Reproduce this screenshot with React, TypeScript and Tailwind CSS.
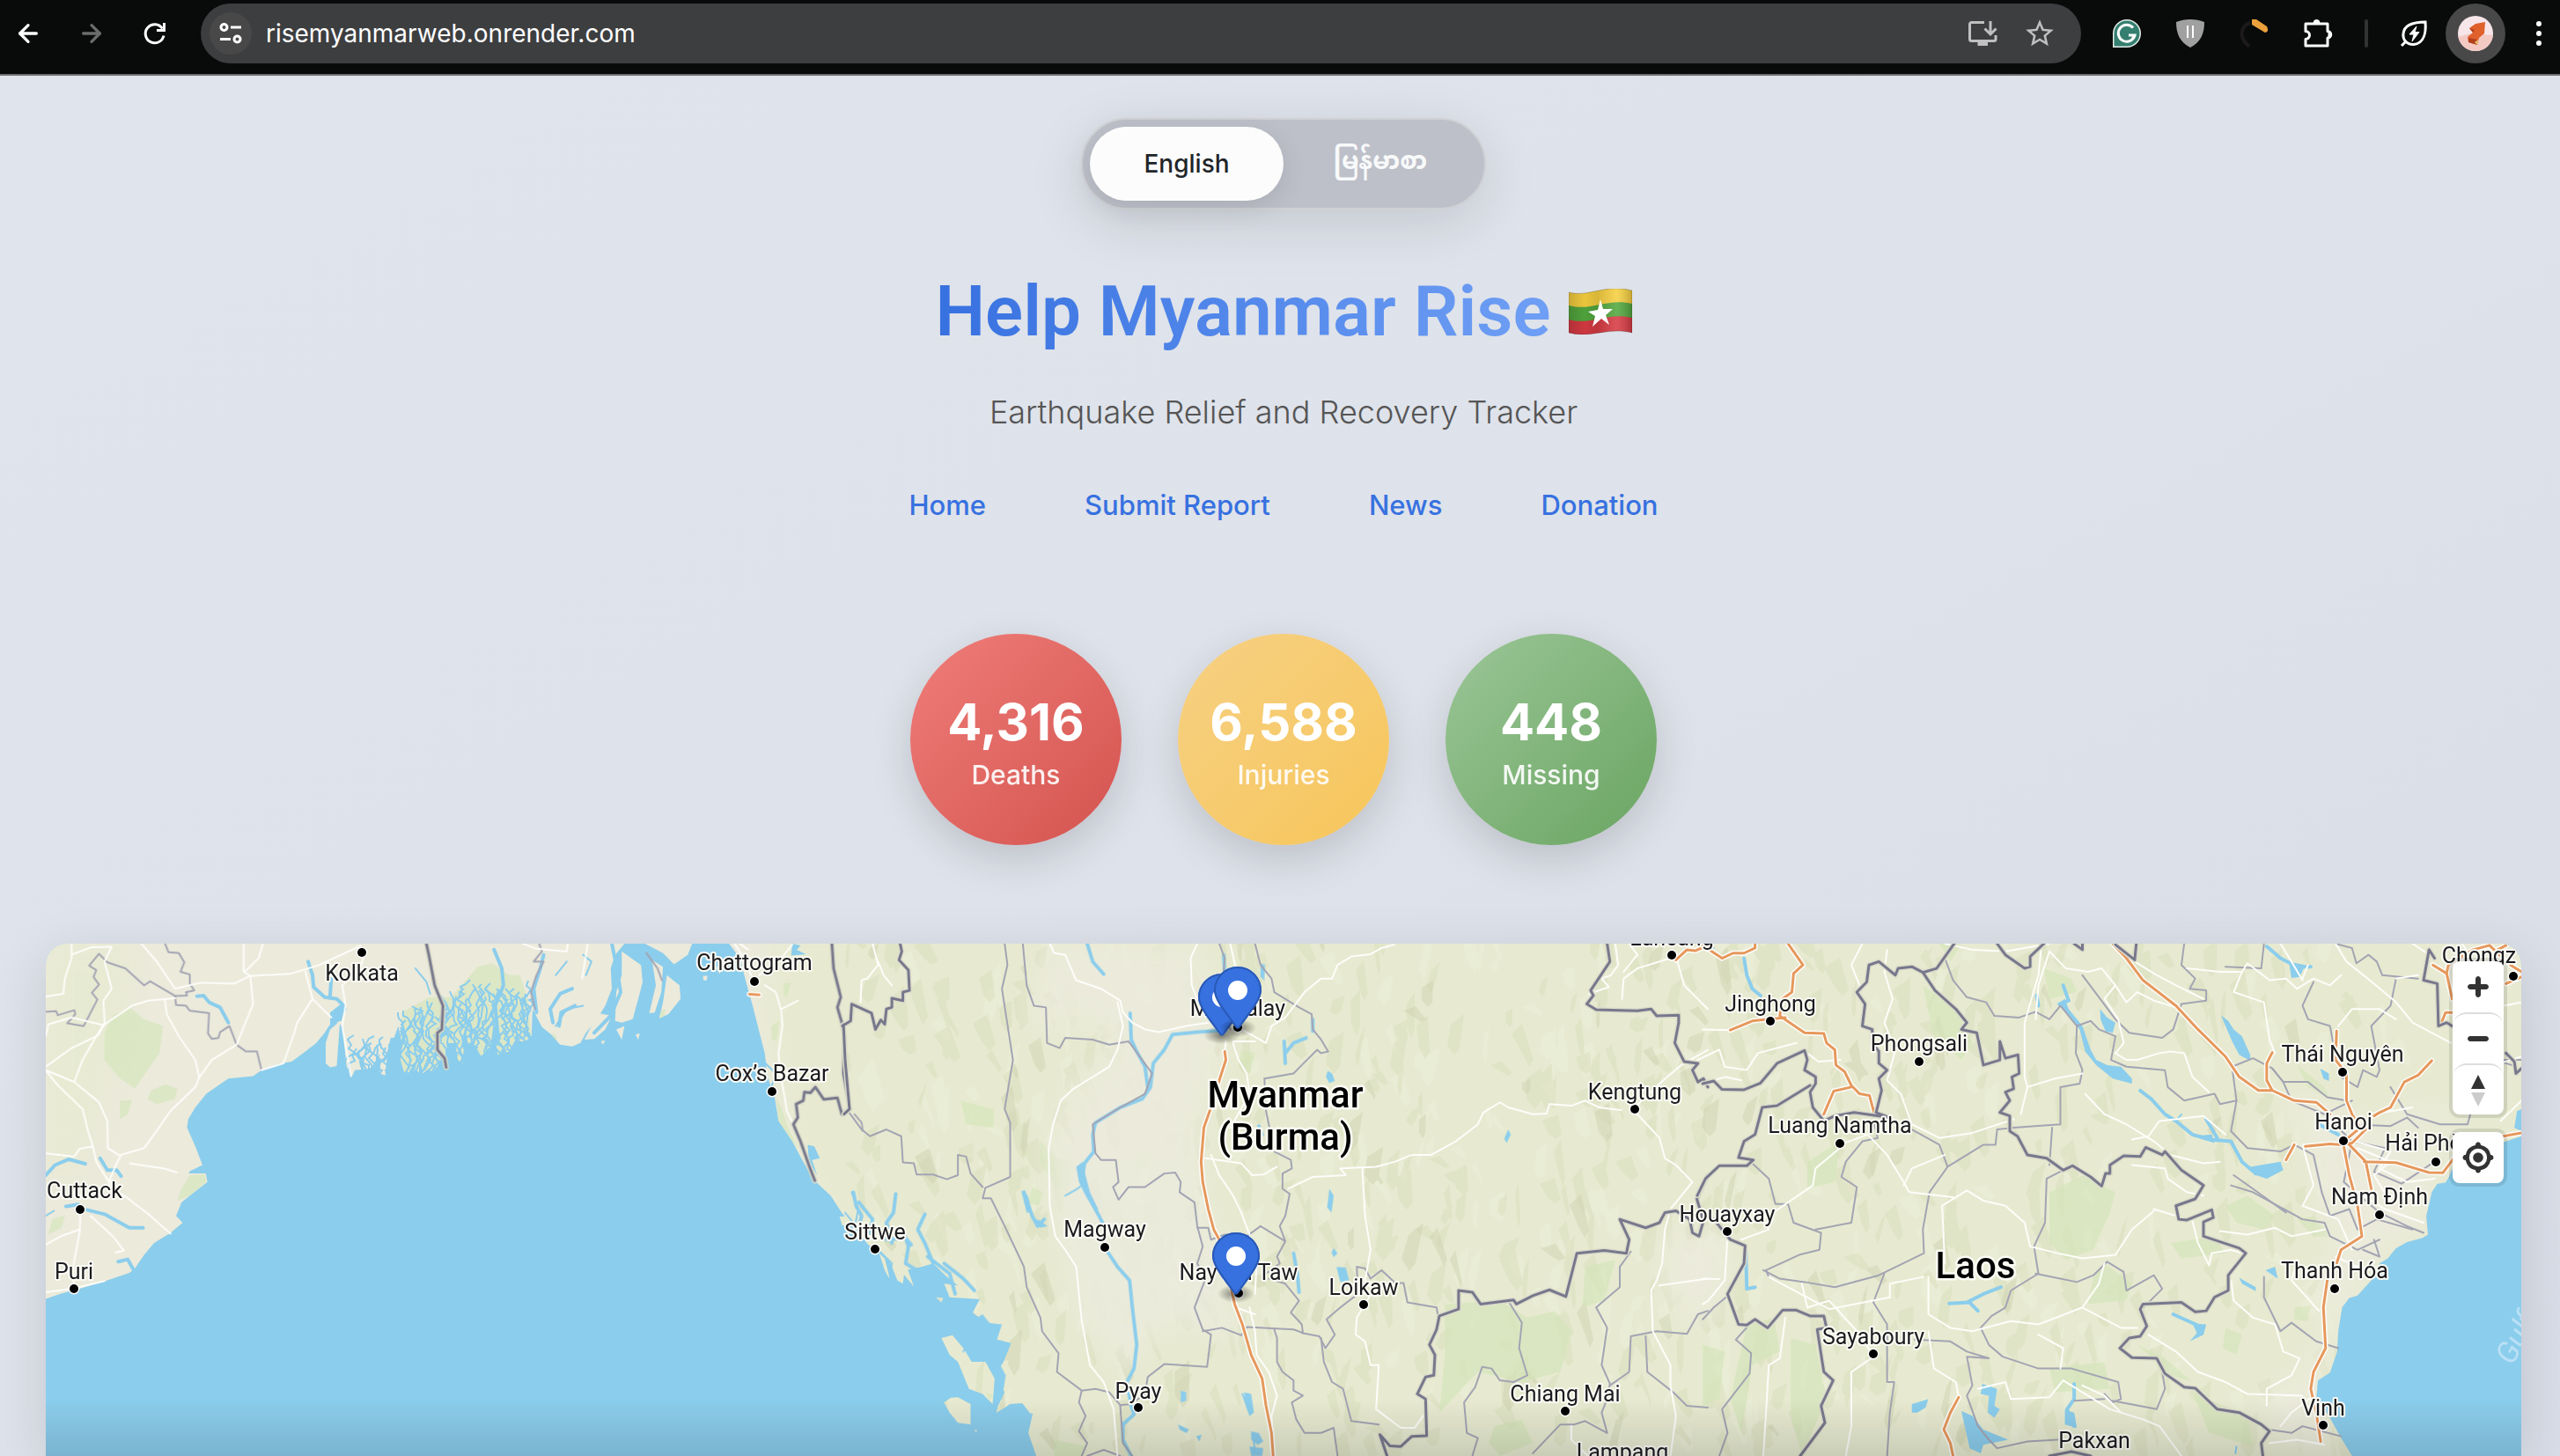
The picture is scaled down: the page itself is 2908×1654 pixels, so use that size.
import type { ReactNode } from "react";
import { ArrowLeft, ArrowRight } from "lucide-react";
import { MdStarOutline } from "react-icons/md";

// ---------------------------------------------------------------------------
// Map data. The geometry is stored in three tiles, each on its own local grid.
// ---------------------------------------------------------------------------

interface Tile {
  id: string;
  originX: number;
  land: string[];
  plain: string[];
  green: string[];
  water: string[];
  rivers: string[];
  thinRivers: string[];
  provinces: string[];
  roads: string[];
  highways: string[];
  countries: string[];
}

const WEST: Tile = {
  id: "west",
  originX: 0,
  land: [
    "M83 57H1135L1118 90 1110 130 1112 190 1100 240 1085 280 1065 320 1055 350 1040 360 1018 355 1002 325 985 303 968 250 966 330 955 345 935 345 925 375 905 385 900 345 885 370 875 390 860 350 845 350 842 410 832 400 828 350 812 350 812 415 800 400 790 435 775 430 765 445 757 430 735 440 728 400 725 335 710 335 705 370 700 445 688 445 690 380 675 425 645 430 640 448 630 420 622 300 608 285 598 300 590 320 575 350 555 375 530 405 505 412 475 430 460 448 415 455 375 500 355 540 342 575 340 600 355 655 368 710 345 728 340 745 343 735 374 735 377 760 345 800 330 820 320 860 332 880 310 910 280 940 262 975 245 1015 235 1028 195 1050 150 1072 110 1090 83 1105Z",
    "M618 285L600 310 592 350 592 410 600 422 612 418Z",
    "M1130 80L1165 120 1168 170 1160 220 1150 280 1130 290 1118 285 1120 200 1130 150Z",
    "M1185 105L1205 125 1202 200 1190 260 1180 262 1192 180Z",
    "M1212 150L1235 180 1237 220 1215 265 1198 278 1205 230Z",
    "M1088 262L1112 270 1100 310 1080 338 1062 340 1075 300Z",
    "M1120 310L1135 300 1130 340ZM1155 325L1163 322 1160 340ZM1092 345L1100 342 1096 355ZM1278 152L1286 152 1284 166 1278 164ZM1300 125L1312 130 1308 146Z",
    "M1172 57H1258L1250 90 1225 118 1205 85Z",
    "M1325 57L1345 100 1355 165 1368 240 1382 330 1390 380 1395 450 1408 510 1415 580 1440 640 1460 700 1480 755 1510 800 1530 850 1545 880 1568 900 1575 57Z",
  ],
  plain: [],
  green: [
    "M205 270L235 245 262 280 296 300 290 380 268 430 245 485 215 450 190 400 190 320Z",
    "M275 490L300 472 322 485 318 515 285 530 268 515Z",
    "M345 740L372 738 375 760 345 800 322 815 330 780Z",
    "M95 870L118 858 112 895 88 915Z",
    "M218 520L240 518 232 560 218 575Z",
    "M730 260L780 215 820 215 868 125 895 115 925 150 945 150 960 230 966 330 955 343 925 375 905 385 875 390 845 400 812 412 790 435 757 430 735 438 728 400Z",
    "M1002 322L1012 330 1010 348ZM1198 255L1210 250 1206 278 1197 275Z",
    "M1424 175L1438 172 1430 215 1424 205ZM1402 300L1416 285 1412 345 1403 340Z",
    "M1410 510L1420 540 1432 600 1450 660 1440 640 1415 580Z",
  ],
  water: [
    "M600 260L622 232 630 250 618 285 600 300ZM1440 57L1455 62 1448 75 1465 88 1438 92Z",
    "M1468 650L1480 655 1490 690 1476 695 1485 740 1470 700Z",
    "M840 345L846 300 850 350 846 400ZM893 345L898 280 905 340 900 380ZM716 335L724 300 730 350 722 430 706 430 708 370Z",
  ],
  rivers: [
    "M560 110L568 150 570 185 590 215 612 220 625 240 618 280",
    "M602 160L600 210M898 75L912 130 915 180 900 240 905 330M988 90L982 130 970 190 975 260",
    "M1005 290L1000 250 1018 205 1040 190M1016 300L1020 260 1045 240",
    "M1112 57L1120 120 1128 200 1110 270 1080 320M1150 60L1175 130 1180 200 1162 280",
    "M83 740L100 710 125 693 155 706M158 842L190 855 235 895 260 895M120 832L142 826",
    "M358 212L370 210 380 230 400 245 415 290M182 690L195 725 212 725 220 743M215 995L232 988 243 1020",
  ],
  thinRivers: [
    "M755 130L775 170 782 205M1060 240L1030 250 1010 300M1375 330L1385 400 1410 440 1400 490",
    "M83 860L98 845M1548 790L1560 840 1555 880M1060 90L1075 110 1065 150M1030 110L1010 150",
  ],
  provinces: [
    "M83 258L102 256 105 268 135 253 137 265 122 292 152 300 177 222 167 202 180 178 170 155 175 135 162 122 180 87 195 112 228 130 262 180 273 168 318 211",
    "M300 57L306 82 325 85 335 112 328 140 345 148 345 175 353 195 338 200 340 210 318 211 320 238 338 240 345 255 380 262 378 322 385 338 397 335 400 318 417 300 430 355 447 375 467 375 475 428",
    "M980 57L985 80 970 110 988 110 975 150 965 200 972 250M1175 85L1195 130 1203 165",
    "M1553 560L1566 585 1568 610",
  ],
  roads: [
    "M83 213L115 205 118 160 130 100 130 57M130 90L165 68 203 66 190 110 203 190 188 225 190 290 175 330",
    "M257 57L285 110 318 190M83 420L130 365 178 328 190 295 240 240 270 225 318 218M318 190L365 172 425 175 455 152 528 146 580 120 640 75 655 62",
    "M443 57V140L455 152 460 235 430 355M478 57L470 100 445 140M430 355L385 400 362 452 355 480 310 550 280 620 262 660 220 680 212 705 200 750 198 770 230 805 270 855 310 912",
    "M300 225L303 265 325 330 355 400 362 452M83 430L105 475 150 545 160 610 168 650 175 700 198 760M83 430L135 465 180 525 195 580 196 660 218 682",
    "M83 675L135 685 145 662 168 655M236 705L298 720 322 732M83 330L88 295 130 275 190 298M135 465L150 400 175 330",
    "M475 430L515 410 535 320 540 290 568 220 555 140M568 220L602 275M660 100L655 130 622 180 628 240 622 300 638 448",
    "M146 858L145 905 133 1010 134 1060M165 860L205 920 225 962 210 968M83 945L110 920 145 900M83 1085L130 1075 190 1052M1058 160L1062 120 1068 57M950 57L975 72 1030 80 1032 57",
    "M1335 57L1348 90 1365 150M1390 180L1410 200 1420 255 1422 300 1415 380 1418 440 1425 500M1420 250L1450 225M1345 57L1360 75M1380 150L1420 100 1440 60M1425 500L1430 550 1445 600 1460 680 1475 740",
  ],
  highways: ["M1362 206L1380 208"],
  countries: [
    "M775 57L780 95 790 180 805 240 803 310 795 320 795 370 808 395 811 422",
    "M1512 57L1515 130 1528 215 1522 245 1530 290 1535 330 1533 440 1545 545 1530 560 1522 512 1497 516 1482 480 1473 497 1462 495 1460 520 1447 530 1450 570 1442 590 1455 640 1470 710 1481 756",
    "M1533 296L1545 288 1550 235 1568 250",
  ],
};

const CENTRAL: Tile = {
  id: "central",
  originX: 960,
  land: [
    "M25 57V862L-10 862 -5 888 12 880 42 945 60 962 80 990 95 1050 105 1060 108 1020 140 1010 160 1000 185 1040 205 1065 180 1060 190 1100 245 1105 232 1145 255 1175 285 1180 276 1225 302 1235 288 1290 272 1330 290 1380 278 1420 275 1440 300 1415 322 1412 340 1450 333 1500 350 1580H1610V57Z",
    "M175 1220L195 1212 215 1250 230 1290 255 1290 272 1340 268 1415 250 1385 225 1370 205 1290 190 1270Z",
    "M180 1410L192 1396 205 1395 228 1415 228 1475 205 1470 190 1440Z",
    "M62 970L72 985 82 1050 72 1020ZM90 985L110 1000 125 1068 108 1035ZM165 1100L178 1102 175 1115ZM235 1490L240 1492 238 1498Z",
  ],
  plain: [
    "M375 57H640L655 150 690 330 670 460 648 600 650 760 668 880 705 1060 660 1180 560 1200 520 1330 430 1180 395 960 372 820 372 620 410 470 490 380 440 280 350 330 340 200Z",
    "M1490 900L1568 900V1180L1520 1160 1480 1040Z",
    "M620 1150L700 1120 740 1210 670 1220Z",
  ],
  green: [
    "M1090 1120L1190 1110 1240 1160 1290 1140 1320 1200 1300 1320 1230 1350 1150 1320 1080 1440 1090 1270Z",
    "M425 520L440 560 443 620 430 590ZM355 640L385 690 415 700 405 790 380 770 355 700ZM255 1380L270 1390 262 1400Z",
    "M530 670L552 675 548 720 530 710ZM340 775L360 790 352 830 332 822ZM465 840L485 850 475 880Z",
    "M1180 1480L1230 1460 1250 1530 1190 1568 1170 1530ZM1345 1010L1400 990 1380 1110 1340 1130Z",
    "M720 370L745 380 735 440 715 420ZM210 520L270 545 270 600 220 590Z",
    "M380 1520L440 1540 430 1568 380 1568Z",
  ],
  water: [
    "M877 432L885 440 890 462 880 468 874 450ZM1205 605L1210 620 1202 645 1198 632ZM880 780L888 800 884 850 876 835 878 810Z",
    "M888 955L895 970 888 982 884 968ZM893 1010L910 1012 916 1050 900 1055ZM610 1375L620 1380 620 1405 610 1410ZM605 1475L625 1490 620 1500 608 1490Z",
    "M725 1380L738 1385 743 1440 735 1450 728 1420ZM738 1495L752 1500 760 1525 750 1535 738 1520ZM735 1540L760 1545 758 1568 738 1568ZM638 1510L648 1505 644 1525Z",
    "M755 115L763 120 762 165 755 155ZM320 785L332 800 340 850 330 850ZM342 868L352 872 368 890 355 895Z",
    "M420 715L432 700 437 740 445 790 460 840 455 850 437 800 425 760Z",
    "M235 1165L250 1150 262 1175 275 1190 268 1225 255 1215 240 1240 215 1235 210 1205 225 1200ZM272 1245L285 1260 282 1300 292 1330 285 1400 272 1400Z",
  ],
  rivers: [
    "M692 312L640 318 595 325 580 370 560 410 555 480 540 515 500 540 455 585 450 620 452 670 435 705 430 760 445 810 468 880",
    "M440 57L450 110 470 147M518 262L520 340 530 375 545 420 550 480M688 90L690 150 680 200 690 300",
    "M478 968L495 1010 517 1050 522 1130 530 1240 525 1310 512 1350 520 1420 525 1445 505 1475 505 1520 520 1568",
    "M15 790L20 830 30 860 25 890M92 795L88 850 75 880 85 940M145 855L132 900 145 940 160 1000M105 900L115 950 110 1000 130 1020",
    "M25 820L50 870 45 910M75 930L110 925 120 945M150 980L190 1030 200 1090M180 1000L215 1045 235 1080",
    "M325 790L340 860 350 890 362 870M815 970L822 1030 825 1085M798 345L800 410M800 380L815 350 838 335M850 280L850 315M752 595L758 620",
  ],
  thinRivers: [
    "M0 850L20 890M400 800L420 782 430 770M60 960L85 1000 80 1060M205 1160L230 1210 215 1260M285 1230L262 1270 275 1300",
    "M722 1385L735 1440M740 1500L745 1550M300 1420L320 1450 340 1445M310 1450L325 1490",
  ],
  provinces: [
    "M290 57L295 120 285 190 305 400 290 545 300 585 300 745 255 777 250 808 265 808 290 890 325 1010 330 1070 355 1160 358 1200 388 1265 385 1320 430 1375 425 1410 437 1450 425 1495 440 1530 430 1568",
    "M5 550L30 605 45 625 75 605 102 625 105 702 125 705 130 738 160 738 185 752 205 740 205 680 220 685 228 735 250 775",
    "M323 57L330 180 343 240 365 245 367 350 390 365 400 335 450 340 480 355 515 345 522 360 558 440 545 500 495 545 450 590 455 675 465 695 492 695 497 760 487 775 497 812 515 775 545 775 580 735 600 732 610 760 608 790 635 820 640 890 650 950 640 1000 655 1045 635 1130 650 1195 665 1210 658 1305 580 1297 550 1335 545 1385 520 1415 500 1418 480 1380 455 1370 430 1375",
    "M680 57L690 100 685 200 700 310M745 57L755 120 775 160 780 200 825 245 848 265 850 310 865 340 878 375 865 380 858 370 830 415 815 440 762 455 765 550 770 590 780 670 810 695 812 720 795 735 795 780 808 795 800 860 790 890 800 935 785 980 790 1000 765 1030",
    "M640 895L660 895 665 930 690 915 730 920 755 890 800 935M650 1200L685 1190 720 1212 730 1188 815 1195 832 1205 830 1180 810 1145 825 1110 800 1060 770 1045",
    "M930 1010L945 1015 955 1045 975 1020 1000 1058 1015 1058 1022 1115 1075 1130 1077 1150M930 1010L932 1090 900 1130 875 1165 890 1210 873 1250 862 1215 830 1205",
    "M780 1195L785 1220 785 1290 795 1320 815 1345 815 1375 832 1390 812 1410 820 1460 835 1500 865 1500 888 1485 895 1568M865 1220L870 1290 885 1350 905 1370 920 1465 970 1475",
    "M1205 1110L1230 1175 1225 1250 1240 1330 1215 1350 1190 1345 1175 1310 1158 1305 1145 1365 1125 1410 1130 1500 1150 1515 1140 1568",
    "M1428 965L1408 1010 1408 1070 1365 1130 1385 1190 1375 1300 1390 1355 1385 1400 1375 1440 1385 1500 1345 1465 1325 1475 1300 1475 1250 1560M1568 1140L1550 1150 1530 1208 1475 1200 1428 1215 1425 1320 1390 1360M1455 1215L1458 1320 1505 1380 1530 1420 1568 1425",
    "M440 1568L470 1550 500 1568M500 1420L505 1530 522 1568",
  ],
  roads: [
    "M372 57L380 85 400 90 420 165 465 190 500 225 505 260 522 290 545 310 570 318 620 300 660 290M495 230L505 300 495 370 480 420 415 485 392 520 378 590 370 660 372 830 382 920 400 960 420 1010 430 1170 445 1300 470 1350 488 1430 495 1568",
    "M640 57L628 100 630 180 640 220M700 57L710 130 720 200M715 305L765 350 775 300 800 275 835 200 865 160 885 160 895 120 920 95 955 88 975 70 998 60",
    "M705 345L745 345M705 350L715 400 730 440 735 500 700 600M692 345L690 375M655 690L720 705 740 740 760 738 785 715M665 680L680 740 705 800 720 850 735 915",
    "M805 780L850 745 910 740 900 720 965 715 1000 700 1030 680 1065 680 1110 640 1150 590 1160 555 1190 525 1205 540 1250 560 1275 558 1280 530 1320 535 1345 520 1370 540 1410 548M940 720L945 860 955 960 945 1050 960 1080 930 1160 928 1210 945 1230 955 1300 970 1300 965 1430 1010 1485 1035 1485 1055 1440",
    "M1440 560L1480 630 1490 690 1510 710 1540 760 1500 840 1490 900 1485 1000 1475 1050 1465 1080 1468 1200 1500 1300 1500 1360 1510 1450 1500 1568M1480 1065L1568 1045M1435 540L1480 470 1520 415 1568 370",
    "M50 57L60 120 40 160 30 165 28 230M60 110L70 150 85 180M735 1130L745 1200 748 1270 770 1320 785 1390 775 1450 780 1568M735 920L748 1000 745 1090",
    "M1400 60L1405 120 1392 150 1375 160 1388 185 1352 205M1500 100L1440 130 1415 160 1412 220M1425 57L1440 90 1415 140M1510 95L1525 180 1568 250M1320 1480L1320 1520 1350 1568M700 1100L710 1130 745 1150",
  ],
  highways: [
    "M690 375L692 400 680 460 665 540 652 600 647 700 650 760 660 840 670 900 690 960 700 1060 708 1120 722 1180 738 1270 758 1340 765 1420 775 1500 778 1568",
    "M1510 105L1530 75 1545 78 1568 62",
  ],
  countries: [
    "M100 57L103 80 98 105 115 135 117 195 105 200 105 225 85 218 85 245 75 250 72 295 65 282 55 310 48 262 12 235 10 285 -5 300",
    "M-3 296L0 400 8 545 -2 560",
    "M1385 57L1390 110 1355 195 1360 210 1348 235 1365 252 1440 255 1465 250 1475 270 1515 268 1515 290 1508 350 1525 405 1550 410 1540 430 1550 465 1560 455 1568 480",
    "M1568 740L1548 810 1560 875 1552 920 1540 910 1535 870 1510 845 1490 850 1480 880 1455 895 1408 870 1425 930 1420 970 1380 962 1330 970 1310 1098 1280 1078 1250 1095 1220 1120 1215 1108 1155 1120 1140 1085 1115 1080 1115 1135 1080 1155 1075 1195 1062 1240 1072 1270 1070 1330 1055 1335 1040 1385 1055 1400 1057 1508 1030 1510 1010 1540 990 1538 972 1505 985 1568",
  ],
};

const EAST: Tile = {
  id: "east",
  originX: 1928,
  land: ["M10 57H1510V1580H10Z"],
  plain: [
    "M1060 500L1140 520 1190 560 1300 640 1375 700 1330 790 1325 920 1260 950 1200 1080 1160 1230 1130 1340 1130 1480 1195 1568H1110L1040 1500 1020 1400 1090 1330 1140 1200 1120 1050 1170 940 1130 850 1110 650Z",
    "M10 900L50 920 60 1030 40 1120 10 1160Z",
    "M1270 520L1400 560 1390 600 1250 600Z",
    "M1385 57H1498V120L1440 200 1370 240 1350 130Z",
  ],
  green: [
    "M640 790L700 740 760 790 750 850 720 960 670 990 640 940Z",
    "M410 180L470 250 500 350 480 400 430 330ZM440 57L480 60 460 110Z",
    "M960 830L1000 800 1050 860 1030 900 980 880ZM1090 870L1120 860 1150 920 1120 920ZM1085 1130L1115 1125 1110 1170 1085 1165Z",
    "M740 1000L790 1060 780 1110 710 1120 720 1040ZM200 700L260 640 250 760 200 780ZM860 940L940 920 960 970 880 985Z",
    "M640 1310L740 1290 750 1370 650 1380ZM900 1380L1000 1450 1010 1540 930 1500ZM90 1180L140 1160 150 1260 100 1300 80 1500 60 1400Z",
    "M170 1220L215 1240 235 1400 190 1568 170 1450ZM1090 415L1140 480 1150 515 1110 480ZM960 1190L990 1210 980 1270 955 1250Z",
    "M630 130L680 160 690 200 640 220ZM800 1240L850 1280 900 1350 860 1330Z",
    "M10 1240L50 1260 40 1400 10 1420Z",
  ],
  water: [
    "M1498 545L1490 550 1485 600 1498 610ZM1498 625L1470 640 1440 660 1400 700 1372 722 1366 745 1360 762 1345 765 1335 790 1325 860 1328 915 1318 925 1290 937 1270 955 1255 985 1240 1000 1225 1050 1200 1095 1185 1102 1172 1130 1165 1200 1163 1260 1150 1322 1128 1345 1125 1400 1148 1450 1170 1515 1195 1580H1510V625Z",
    "M952 268L965 285 975 310 990 330 1005 385 1005 402 985 385 972 345 960 300Z",
    "M655 235L668 220 675 250 700 300 715 370 725 400 745 415 770 420 790 455 790 470 755 455 725 415 705 375 695 310 680 280Z",
    "M732 250L745 275 760 290 755 320 742 315 733 280ZM1005 715L1060 700 1065 725 1035 750 1012 738ZM1132 425L1148 440 1148 462 1138 455Z",
    "M480 1435L500 1450 520 1490 565 1520 520 1535 515 1560 495 1545ZM518 1355L545 1370 540 1420 550 1430 540 1455 528 1440 530 1390 515 1385Z",
    "M390 1415L420 1400 415 1425 400 1440 390 1440ZM668 1432L685 1440 690 1485 668 1475ZM900 1178L925 1180 920 1210 895 1230 908 1205Z",
    "M985 1042L1015 1070 1015 1082 990 1060ZM1033 1020L1050 1010 1055 1045ZM1075 110L1105 120 1095 155 1080 158ZM900 625L935 620 940 645Z",
  ],
  rivers: [
    "M617 210L620 240M665 180L675 225 658 235M805 490L825 515 850 560 870 580 900 620 935 635 970 640 990 700 1015 735",
    "M85 100L90 150 100 190 115 210M88 950L90 1075 105 1070M1035 65L1060 100 1090 125 1115 125M458 1118L495 1115 510 1140M490 1115L520 1090 552 1070",
    "M865 1150L895 1172 920 1190M685 1355L685 1400 672 1430 685 1480M1130 590L1165 620M925 575L945 630",
  ],
  thinRivers: ["M980 1540L978 1560M870 580L880 560M10 60L30 70"],
  provinces: [
    "M450 100L465 165 490 215 525 230 540 270 585 275 615 258 640 280 660 240 690 300 688 380 700 430 695 470 660 480 660 590 575 600 545 605 542 650 520 650 455 715 422 790 410 900 412 970 330 1035 250 1070 195 1055 150 1045 120 1020M690 300L715 285 730 310 760 330 752 400 780 420 850 430 855 480 885 520 940 500 950 530 980 520 972 420 1010 395 1045 425 1065 465 1110 465 1145 510 1180 520",
    "M885 57L880 120 905 160 895 190 925 195 925 225 880 235 865 310 845 335 785 320 760 280 700 150M1030 57L1025 130 960 125M1120 170L1100 240 1110 280 1150 300 1155 345M1160 57L1190 70 1198 115 1220 90 1235 110 1245 150 1310 160",
    "M1045 425L1065 465 1080 520 1140 560 1190 520M1170 450L1200 480 1210 430 1235 450 1240 430 1225 300 1260 240 1270 160M1260 480L1290 560 1350 590 1400 590 1405 560M1190 590L1260 595 1290 570 1310 600",
    "M980 520L970 610 1000 660 1060 670 1085 650 1120 680 1135 790 1150 860 1185 840 1200 900 1235 870 1300 900M1190 640L1250 660 1230 730 1280 765 1340 700M970 770L1010 790 1100 870 1140 880 1150 920 1200 960 1240 930",
    "M975 740L1010 780 1070 850M1140 560L1190 640 1175 760 1240 850 1290 890 1320 910M1230 930L1240 980 1210 960",
    "M635 750L632 880 612 950 620 1030 570 1080 560 1130 535 1155 515 1190 530 1240 555 1275 620 1310 680 1310 765 1350 770 1400 755 1410 740 1385M665 725L635 750M615 1030L690 1055 720 1035 745 995 775 1025 780 1080 830 1035 845 1075 805 1140",
    "M100 705L130 750 142 825 165 825 175 880 225 910 222 960 185 975 125 1020 130 1040M270 700L262 745 290 775 280 880 215 900M320 580L328 630 300 640 270 700",
    "M340 1030L320 1115 345 1180 345 1350 358 1350 350 1440 345 1568M395 1225L460 1230 490 1260 530 1280 490 1275 500 1360 490 1390 510 1480 530 1520 545 1545 600 1525 655 1520M390 605L440 650 455 715",
    "M1030 1040L1030 1100 1060 1200 1080 1175 1125 1230 1165 1250M1040 1490L1080 1500 1100 1480 1170 1510M845 1320L850 1370 835 1430 755 1405M685 1405L740 1400",
    "M95 1180L70 1225 98 1265 95 1325 45 1430 55 1500 40 1568M10 1165L30 1130 52 1100M640 710L645 600",
    "M1498 400L1450 400 1480 415",
  ],
  roads: [
    "M300 57L280 120 295 180M345 75L340 140 355 220 340 290 360 370 345 460 370 500 390 590 440 630 500 615 575 575M450 57L500 75 560 80 640 57M625 70L620 150 595 290 595 450 600 480 588 560",
    "M640 80L670 130 710 140 735 130 760 180 780 230 800 200 830 225 870 245M640 80L620 180 615 280M760 180L740 220 765 280 775 350 760 380 780 400 800 400 840 380 860 375 885 380 900 450 930 495",
    "M775 90L830 145 870 180 920 220M890 130L950 140 990 140 1000 115 1040 165 1070 160 1090 190 1120 160 1150 180 1170 150M1060 57L1080 110 1100 165M990 140L975 200 1030 230 1040 340 1050 380",
    "M1160 57L1180 110 1230 175 1270 230 1300 290 1370 350M1270 160L1310 150M1270 280L1240 250 1190 250 1165 300M1300 57L1340 100",
    "M600 480L650 455 700 440M705 500L740 560 780 590 830 640 860 680 920 705 950 700M790 635L820 625 840 580 920 565 960 620M1110 120L1100 160",
    "M200 380L220 405 260 400M10 470L50 450 80 460M0 400L40 370 50 420 90 430 110 380 180 350M10 310L60 312",
    "M259 650L310 620 345 680 375 760 385 790 465 805M375 770L390 720 450 680M259 660L215 720 210 770 120 870 130 900 80 930M450 1000L445 830 490 785 520 815 560 830 595 880 605 950 655 970 700 985 760 975 790 900 830 845",
    "M790 710L850 720 855 750 890 790 920 800M830 840L900 875 910 940 930 1005 935 970 970 960 990 970M410 1040L350 1060 350 1100 240 1135 130 1040M420 1040L420 1150 460 1190 500 1200 570 1170 620 1180 700 1130 770 1190 800 1190",
    "M700 1130L730 1060 740 1000M620 1210L665 1250 660 1310M325 1270L280 1320 280 1480 270 1568M420 1200L430 1310 470 1350 475 1395M315 1260L290 1200 240 1110 200 1130 190 1060",
    "M160 1160L150 1280 130 1300 125 1440 120 1568M820 1210L870 1260 910 1320 960 1350 1000 1385 1100 1390M510 1370L560 1350 570 1400 640 1395 665 1345 750 1430 810 1460 840 1480 880 1568M700 1360L740 1390 770 1440",
    "M950 905L1000 915 1050 895 1080 920 1140 900M1100 650L1120 770 1100 830 1165 870 1190 960M970 1050L975 1110 1010 1160 1050 1180 1065 1260 1095 1280 1080 1330 1035 1370 1035 1420M1090 990L1080 1050 1130 1140",
    "M1195 640L1260 670 1240 720 1290 760 1340 750M1200 660L1260 700 1230 740 1260 820M1230 560L1300 540M1190 780L1250 840 1320 880M1040 1530L1090 1520 1140 1535M55 920L50 1050 20 1110 10 1120M10 1045L40 1046",
    "M1160 980L1200 1010 1230 1020M1120 1390L1080 1440 1060 1480M1390 57L1420 130M1498 230L1450 245M1440 420L1498 390M1498 520L1460 580",
  ],
  highways: [
    "M10 62L45 100 65 85 85 85 105 70 105 57M165 57L192 120 175 145 172 200 155 220 150 270 195 320 230 322 235 350 250 370 252 415 268 435 280 475 295 500 313 505 322 560M280 480L248 492 230 560M60 312L100 285 130 280 160 275",
    "M755 57L780 100 810 165 870 240 910 310 960 390 985 450 1020 490 1045 490 1085 520 1125 525 1150 560M1045 490L1035 460 1035 410 1045 378",
    "M1162 315L1160 400 1180 440 1180 520 1190 560 1205 600 1175 640M1335 402L1310 445 1285 465 1260 540 1240 555 1230 565M1105 655L1150 648 1170 650 1190 645 1215 605M1070 695L1085 650",
    "M1175 655L1185 740 1200 830 1208 920 1170 960 1160 1010 1145 1050 1138 1130 1142 1250 1120 1320 1115 1370 1125 1440 1133 1525M1185 650L1215 700 1225 780M1212 700L1270 703 1330 732 1355 733 1375 690",
    "M475 1395L460 1440 448 1490 460 1530 465 1568M1337 120L1362 145 1372 220M1352 292L1360 260 1372 260M1362 145L1365 120 1410 75 1440 62 1470 110M1465 625L1498 615M1470 175L1498 155M1455 75L1470 62M1478 120L1498 140",
  ],
  countries: [
    "M10 470L30 462 45 487 85 488 115 468 145 410 195 372 200 400 195 430 215 450 215 470 205 495 210 540 230 580 250 565 285 555 350 570",
    "M467 57L435 130 410 142 390 125 365 130 360 150 330 110 312 120 308 170 290 200 305 235 300 300 318 310 318 350 330 375 330 410 345 430 330 455 335 490 325 555 350 570",
    "M410 142L432 195 470 250 490 290 480 310 508 320 520 415 550 400 550 345 560 395 583 385 585 440 572 450 575 485 560 495 568 520 550 555 568 565 568 610 582 625 600 680 635 690 665 725 682 712 715 745 735 772 742 735 750 735 750 710 775 683 805 685 815 658 845 680 850 670 880 725 920 770 905 810 870 830 875 870 890 872 935 842 938 865 920 878 920 920 985 955 997 970 965 1035 965 1080 940 1100 925 1140 905 1143 880 1115 810 1120 805 1135 817 1185 805 1215 785 1220 768 1250 790 1278 835 1280 850 1325 885 1365 905 1368 945 1430 985 1440 1025 1475 1040 1495 1025 1530 1028 1568",
    "M545 57L560 90 595 130 605 125 605 95 630 57M685 57L700 75 700 57M760 60L795 105 798 57",
    "M0 800L15 750 40 712 90 712 102 695 75 688 85 640 105 620 118 540 145 535 205 475",
    "M30 870L60 930 87 948 85 1000 55 1090 75 1180 90 1182 105 1165 128 1190 155 1138 180 1138 205 1155 230 1155 235 1190 218 1195 230 1320 247 1345 225 1420 232 1470 187 1568",
    "M1340 100L1330 75 1320 165 1345 175 1347 300 1362 290 1372 300M1470 380L1485 405 1488 440 1498 425M640 1568L680 1555 715 1568",
  ],
};

const TILES = [WEST, CENTRAL, EAST];

interface Place {
  name: string;
  x: number;
  y: number;
  dot?: number;
}

const PLACES: Place[] = [
  { name: "Kolkata", x: 411, y: 1114, dot: 1082 },
  { name: "Chattogram", x: 857, y: 1102, dot: 1115 },
  { name: "Cox’s Bazar", x: 877, y: 1228, dot: 1240 },
  { name: "Puri", x: 84, y: 1453, dot: 1464 },
  { name: "Mandalay", x: 1406, y: 1154, dot: 1167 },
  { name: "Kengtung", x: 1857, y: 1249, dot: 1260 },
  { name: "Sittwe", x: 994, y: 1408, dot: 1419 },
  { name: "Magway", x: 1255, y: 1405, dot: 1417 },
  { name: "Nay Pyi Taw", x: 1407, y: 1454, dot: 1469 },
  { name: "Loikaw", x: 1549, y: 1471, dot: 1482 },
  { name: "Pyay", x: 1293, y: 1589, dot: 1599 },
  { name: "Chiang Mai", x: 1778, y: 1592, dot: 1603 },
  { name: "Lampang", x: 1843, y: 1658 },
  { name: "Lancang", x: 1899, y: 1074, dot: 1085 },
  { name: "Jinghong", x: 2011, y: 1149, dot: 1160 },
  { name: "Phongsali", x: 2180, y: 1194, dot: 1206 },
  { name: "Luang Namtha", x: 2090, y: 1287, dot: 1299 },
  { name: "Thái Nguyên", x: 2661, y: 1206, dot: 1218 },
  { name: "Hanoi", x: 2662, y: 1283, dot: 1296 },
  { name: "Hải Phòng", x: 2767, y: 1307, dot: 1320 },
  { name: "Nam Định", x: 2703, y: 1368, dot: 1380 },
  { name: "Thanh Hóa", x: 2652, y: 1452, dot: 1464 },
  { name: "Houayxay", x: 1962, y: 1388, dot: 1399 },
  { name: "Sayaboury", x: 2128, y: 1527, dot: 1538 },
  { name: "Vinh", x: 2639, y: 1608, dot: 1619 },
  { name: "Pakxan", x: 2379, y: 1645 },
  { name: "Chongz", x: 2816, y: 1094 },
  { name: "Cuttack", x: 96, y: 1361 },
];

// Towns whose dot is not centred under the name.
const LOOSE_DOTS = [
  { x: 91, y: 1374 },
  { x: 2855, y: 1109 },
];

const COUNTRIES: Place[] = [
  { name: "Myanmar", x: 1460, y: 1258 },
  { name: "(Burma)", x: 1460, y: 1306 },
  { name: "Laos", x: 2244, y: 1452 },
];

const PINS = [
  { x: 1388, y: 1176 },
  { x: 1406, y: 1168 },
  { x: 1404, y: 1470 },
];

// Small seeded generator so the relief is the same on every render.
function seeded(seed: number) {
  let s = seed;
  return () => {
    s = (s * 16807) % 2147483647;
    return s / 2147483647;
  };
}

function reliefPaths(count: number, seed: number, from: number, to: number) {
  const rand = seeded(seed);
  let d = "";
  for (let i = 0; i < count; i++) {
    const x = Math.round(from + rand() * (to - from));
    const y = Math.round(1062 + rand() * 582);
    const w = Math.round(4 + rand() * 14);
    const h = Math.round(12 + rand() * 34);
    const lean = Math.round((rand() - 0.4) * 22);
    d += `M${x} ${y}l${w} ${-Math.round(h * 0.3)}l${lean} ${h}l${-Math.round(w * 0.4)} ${Math.round(h * 0.2)}l${-Math.round(w * 0.5)} ${-Math.round(h * 0.3)}z`;
  }
  return d;
}

// Mangrove creeks of the Ganges delta.
function deltaCreeks() {
  const rand = seeded(77);
  let d = "";
  for (let i = 0; i < 62; i++) {
    let x = 402 + i * 3.3;
    const coast = x > 500 ? 1222 - (x - 500) * 0.25 : 1224;
    const inland = x < 450 ? 1176 : x < 530 ? 1150 - (x - 450) * 0.4 : 1112;
    let y = inland + rand() * 24;
    d += `M${Math.round(x)} ${Math.round(y)}`;
    while (y < coast) {
      x += (rand() - 0.5) * 13;
      y += 2 + rand() * 6;
      d += `L${Math.round(x)} ${Math.round(y)}`;
    }
  }
  return d;
}

const RELIEF_DARK = reliefPaths(620, 11, 960, 2660);
const RELIEF_DEEP = reliefPaths(90, 29, 960, 2600);
const RELIEF_LIGHT = reliefPaths(300, 53, 960, 2760);
const DELTA = deltaCreeks();

function Lines({ paths, stroke, width }: { paths: string[]; stroke: string; width: number }) {
  return (
    <g fill="none" stroke={stroke} strokeWidth={width} strokeLinejoin="round" strokeLinecap="round">
      {paths.map((d) => (
        <path key={d} d={d} vectorEffect="non-scaling-stroke" />
      ))}
    </g>
  );
}

function Areas({ paths, fill, opacity = 1 }: { paths: string[]; fill: string; opacity?: number }) {
  return (
    <g fill={fill} opacity={opacity}>
      {paths.map((d) => (
        <path key={d} d={d} />
      ))}
    </g>
  );
}

function TileLayer({ render }: { render: (tile: Tile) => ReactNode }) {
  return (
    <>
      {TILES.map((tile) => (
        <g key={tile.id} transform={`translate(${tile.originX} 1050) scale(0.625 0.3852)`}>
          {render(tile)}
        </g>
      ))}
    </>
  );
}

function ReliefMap() {
  return (
    <svg
      viewBox="52 1072 2812 582"
      preserveAspectRatio="xMidYMin slice"
      className="absolute inset-0 h-full w-full font-[Roboto,'Noto_Sans',sans-serif]"
      role="img"
      aria-label="Map of Myanmar and neighbouring countries"
    >
      <defs>
        <filter id="soft" x="-20%" y="-20%" width="140%" height="140%">
          <feGaussianBlur stdDeviation="14" />
        </filter>
        <radialGradient id="pin-shadow">
          <stop offset="0.1" stopColor="#000" stopOpacity="0.45" />
          <stop offset="1" stopColor="#000" stopOpacity="0" />
        </radialGradient>
        <clipPath id="land-clip">
          {TILES.map((tile) => (
            <path
              key={tile.id}
              d={tile.land.join("")}
              transform={`translate(${tile.originX} 1050) scale(0.625 0.3852)`}
            />
          ))}
        </clipPath>
      </defs>

      <rect x="52" y="1072" width="2812" height="1200" fill="#8bcdec" />

      {/* Land, plains and vegetation */}
      <TileLayer render={(t) => <Areas paths={t.land} fill={t.id === "west" ? "#ebeadb" : "#e7ead0"} />} />
      <g clipPath="url(#land-clip)">
        <path d="M880 1060H1000V1420H960L900 1300 870 1150Z" fill="#e7ead0" filter="url(#soft)" />
        <path d="M52 1072H150L130 1190 90 1330 52 1340Z" fill="#e7ead0" opacity="0.8" filter="url(#soft)" />
        <path d={RELIEF_LIGHT} fill="#eceed9" opacity="0.6" />
        <path d={RELIEF_DARK} fill="#dcdfbf" opacity="0.6" />
        <path d={RELIEF_DEEP} fill="#cdd0ae" opacity="0.45" />
        <TileLayer render={(t) => <Areas paths={t.green} fill="#d3e5b8" opacity={0.6} />} />
        <g filter="url(#soft)">
          <TileLayer render={(t) => <Areas paths={t.plain} fill="#ecebdd" opacity={0.85} />} />
        </g>
      </g>

      {/* Water */}
      <TileLayer
        render={(t) => (
          <>
            <Areas paths={t.water} fill="#8bcdec" />
            <Lines paths={t.thinRivers} stroke="#8bcdec" width={2} />
            <Lines paths={t.rivers} stroke="#8bcdec" width={4} />
          </>
        )}
      />
      <path d={DELTA} fill="none" stroke="#8bcdec" strokeWidth="2" />

      {/* Roads and borders */}
      <TileLayer
        render={(t) => (
          <>
            <Lines paths={t.provinces} stroke="#a3a4b3" width={2} />
            <Lines paths={t.roads} stroke="#fdfdfa" width={2} />
            <Lines paths={t.highways} stroke="#fdfdfa" width={6} />
            <Lines paths={t.highways} stroke="#e6985c" width={3} />
            <Lines paths={t.countries} stroke="#dcdccb" width={6} />
            <Lines paths={t.countries} stroke="#77788c" width={3} />
          </>
        )}
      />

      {/* Place names */}
      {PLACES.map((p) => (
        <g key={p.name}>
          {p.dot && <circle cx={p.x} cy={p.dot} r="5" stroke="#fff" strokeWidth="3" paintOrder="stroke" />}
          <text
            x={p.x}
            y={p.y}
            textAnchor="middle"
            fontSize="25"
            fill="#1b1b1f"
            stroke="#fbfbf5"
            strokeWidth="4"
            strokeLinejoin="round"
            paintOrder="stroke"
          >
            {p.name}
          </text>
        </g>
      ))}
      {LOOSE_DOTS.map((dot) => (
        <circle key={dot.x} cx={dot.x} cy={dot.y} r="5" stroke="#fff" strokeWidth="3" paintOrder="stroke" />
      ))}
      {COUNTRIES.map((c) => (
        <text
          key={c.name}
          x={c.x}
          y={c.y}
          textAnchor="middle"
          fontSize="42"
          fontWeight="500"
          stroke="#fbfbf5"
          strokeWidth="5"
          strokeLinejoin="round"
          paintOrder="stroke"
        >
          {c.name}
        </text>
      ))}
      <text transform="translate(2854 1552) rotate(-62)" fontSize="34" fontStyle="italic" fill="#b9e0f5">
        Gulf of Tonkin
      </text>

      {/* Markers */}
      {PINS.map((pin) => (
        <g key={pin.x} transform={`translate(${pin.x - 27} ${pin.y - 70}) scale(2)`}>
          <ellipse cx="13.5" cy="34.8" rx="10.5" ry="5.25" fill="url(#pin-shadow)" />
          <path
            d="M27,13.5C27,19.07 20.25,27 14.75,34.5C14.02,35.5 12.98,35.5 12.25,34.5C6.75,27 0,19.22 0,13.5C0,6.04 6.04,0 13.5,0C20.96,0 27,6.04 27,13.5Z"
            fill="#3771e0"
          />
          <path
            d="M26.5,13.5C26.5,18.8 19.9,26.6 14.35,34.2C13.9,34.8 13.1,34.8 12.65,34.2C7.1,26.6 0.5,18.9 0.5,13.5C0.5,6.3 6.3,0.5 13.5,0.5C20.7,0.5 26.5,6.3 26.5,13.5Z"
            fill="none"
            stroke="#2959b4"
          />
          <circle cx="13.5" cy="13.5" r="5.5" fill="#fff" />
        </g>
      ))}
    </svg>
  );
}

// ---------------------------------------------------------------------------
// Browser bar
// ---------------------------------------------------------------------------

function BrowserBar() {
  return (
    <header className="flex h-[86px] items-center border-b-2 border-[#6f6d6f] bg-[#090a0a] pr-1.5 pb-2 pl-4 text-white">
      <div className="flex items-center gap-10">
        <button aria-label="Back">
          <ArrowLeft size={32} strokeWidth={2.5} />
        </button>
        <button aria-label="Forward" className="text-[#6c6c6c]">
          <ArrowRight size={32} strokeWidth={2.5} />
        </button>
        <button aria-label="Reload">
          <svg width="32" height="32" viewBox="0 0 32 32" fill="none" stroke="currentColor" strokeWidth="3">
            <path d="M26 18.500A10.500 10.500 0 1 1 24.500 10.500" />
            <path d="M26.500 4V12.500H18" />
          </svg>
        </button>
      </div>

      <div className="ml-9 flex h-[68px] flex-1 items-center rounded-full bg-[#3d3e40] pr-7 pl-[10px]">
        <button aria-label="Site information" className="flex size-12 items-center justify-center rounded-full bg-[#484848]">
          <svg width="26" height="26" viewBox="0 0 26 26" fill="none" stroke="#fff" strokeWidth="3">
            <circle cx="5.500" cy="6" r="3.500" />
            <path d="M13 6H25M1 19.500H13" />
            <circle cx="20.500" cy="19.500" r="3.500" />
          </svg>
        </button>
        <input
          aria-label="Address"
          defaultValue="risemyanmarweb.onrender.com"
          className="ml-4 h-12 min-w-0 flex-1 bg-transparent text-[28px] text-white outline-none"
        />
        <div className="flex items-center gap-7 text-[#c0c0c0]">
          <button aria-label="Install app">
            <svg width="36" height="32" viewBox="0 0 36 32" fill="none" stroke="currentColor" strokeWidth="3">
              <path d="M20 3.500H5.500A2 2 0 0 0 3.500 5.500V22.500A2 2 0 0 0 5.500 24.500H31A2 2 0 0 0 33 22.500V18" />
              <path d="M27 2V16M20.500 10.500L27 17 33.500 10.500" />
              <path d="M12.500 26H24V30H12.500Z" fill="currentColor" stroke="none" />
            </svg>
          </button>
          <button aria-label="Bookmark this page">
            <MdStarOutline size={38} />
          </button>
        </div>
      </div>

      <div className="ml-9 flex items-center gap-10">
        <button aria-label="Grammarly">
          <svg width="32" height="32" viewBox="0 0 32 32">
            <path d="M16 0A16 16 0 1 1 16 32H0V16A16 16 0 0 1 16 0Z" fill="#e6efec" />
            <path d="M16 1.500A14.500 14.500 0 1 1 16 30.500H1.500V16A14.500 14.500 0 0 1 16 1.500Z" fill="#347f70" />
            <path d="M23 9.500A9.500 9.500 0 1 0 25 18H18M25.500 18L22 22.500" fill="none" stroke="#fff" strokeWidth="3" />
          </svg>
        </button>
        <button aria-label="Shield">
          <svg width="32" height="32" viewBox="0 0 32 32">
            <path d="M0 3C10 -1 22 -1 32 3C32 16 28 26 16 32C4 26 0 16 0 3Z" fill="#a0a0a0" />
            <path d="M13 7V21M19 7V21" stroke="#fff" strokeWidth="2" />
          </svg>
        </button>
        <button aria-label="Recorder">
          <svg width="32" height="32" viewBox="0 0 32 32">
            <path d="M12 4A13 13 0 0 0 8 27M4 24L11 31" fill="none" stroke="#1c1a1a" strokeWidth="4" />
            <path d="M14 0H19L31 8Q34 14 29 15L14 6Z" fill="#eba13b" />
          </svg>
        </button>
        <button aria-label="Extensions">
          <svg width="34" height="34" viewBox="0 0 34 34" fill="none" stroke="#fff" strokeWidth="3" strokeLinejoin="round">
            <path d="M3 6H28V14.500A3.500 3.500 0 0 1 28 22V31H3V23.500A4.500 4.500 0 0 0 3 14.500Z" />
            <path d="M12 5A3.500 3.500 0 0 1 19 5ZM29 15A3.500 3.500 0 0 1 29 22Z" fill="#fff" strokeWidth="1" />
          </svg>
        </button>
      </div>
      <div className="ml-9 h-8 w-1 rounded-full bg-[#323233]" />
      <button aria-label="Energy saver" className="ml-9">
        <svg width="32" height="32" viewBox="0 0 32 32" fill="none" stroke="#fff" strokeWidth="3">
          <path d="M29 3C30 14 28 27 16 28.500C8 29 3 23 4 16C5 7 15 3 29 3Z" />
          <path d="M2 30L7 25" />
          <path d="M19 8L11 17H16L14 25L22 14.500H17Z" fill="#fff" strokeWidth="1" strokeLinejoin="round" />
        </svg>
      </button>
      <button aria-label="Profile" className="ml-5 flex size-[68px] items-center justify-center rounded-full bg-[#484848]">
        <svg width="40" height="40" viewBox="0 0 40 40" className="rounded-full">
          <path d="M0 0H40V40H0Z" fill="#f6e6ea" />
          <path d="M0 24L14 20 40 22V40H0Z" fill="#f3c9c4" />
          <path d="M13 14L20 9 31 7 30 20 24 25 22 33 12 30 11 24 17 19Z" fill="#e0612c" />
          <path d="M13 14L19 16 17 19ZM12 25L22 27 22 33 12 30Z" fill="#b23f1c" />
          <path d="M19 30L23 27 22 33Z" fill="#e8c070" />
        </svg>
      </button>
      <button aria-label="Menu" className="ml-5">
        <svg width="36" height="32" viewBox="0 0 36 32" fill="#fff">
          <circle cx="18" cy="5" r="3" />
          <circle cx="18" cy="16" r="3" />
          <circle cx="18" cy="27" r="3" />
        </svg>
      </button>
    </header>
  );
}

// ---------------------------------------------------------------------------
// Page
// ---------------------------------------------------------------------------

function MyanmarFlag() {
  return (
    <svg width="72" height="52" viewBox="0 0 72 52" role="img" aria-label="Flag of Myanmar">
      <defs>
        <linearGradient id="flag-fold" x1="0" x2="1">
          <stop offset="0" stopColor="#000" stopOpacity="0.18" />
          <stop offset="0.25" stopColor="#000" stopOpacity="0.05" />
          <stop offset="0.45" stopColor="#000" stopOpacity="0.12" />
          <stop offset="0.75" stopColor="#fff" stopOpacity="0.12" />
          <stop offset="1" stopColor="#000" stopOpacity="0.2" />
        </linearGradient>
      </defs>
      <path d="M0 4C24 10 40 -6 72 2V18C44 12 26 26 0 20Z" fill="#f6cf3f" />
      <path d="M0 19C26 26 44 10 72 17V34C44 28 26 42 0 36Z" fill="#53a83f" />
      <path d="M0 35C26 42 44 26 72 33V50C44 43 26 57 0 50Z" fill="#d83b43" />
      <path d="M0 4C24 10 40 -6 72 2V50C44 43 26 57 0 50Z" fill="url(#flag-fold)" stroke="#00000033" />
      <path d="M36 12L39 23 50 23 42 30 46 41 37 34 27 43 30 31 22 26 33 24Z" fill="#fff" />
    </svg>
  );
}

function LanguageToggle() {
  return (
    <div className="flex rounded-full border-2 border-[#cfd1d4] bg-[#bdc0c9] p-2 shadow-[0_16px_64px_rgba(0,0,0,0.12)]">
      <button className="h-[84px] w-[220px] rounded-full bg-[#fcfcfc] text-[28px] font-medium text-[#212529] shadow-[0_8px_30px_rgba(0,0,0,0.1)]">
        English
      </button>
      <button className="h-[84px] w-[220px] rounded-full font-['Noto_Sans_Myanmar','Noto_Sans',sans-serif] text-[28px] font-bold text-[#f8f9fa]">
        မြန်မာစာ
      </button>
    </div>
  );
}

const NAV = ["Home", "Submit Report", "News", "Donation"];

const STATS = [
  { value: "4,316", label: "Deaths", tone: "from-[#ef7d79] to-[#d4534f]" },
  { value: "6,588", label: "Injuries", tone: "from-[#f6d083] to-[#f7c659]" },
  { value: "448", label: "Missing", tone: "from-[#9bc697] to-[#6aa562]" },
];

function MapControls() {
  return (
    <div className="absolute top-5 right-5 flex flex-col gap-5 text-[#333]">
      <div className="flex flex-col rounded-lg bg-white shadow-[0_0_0_4px_rgba(0,0,0,0.1)]">
        <button aria-label="Zoom in" className="flex size-[58px] items-center justify-center">
          <svg width="58" height="58" viewBox="0 0 29 29" fill="currentColor">
            <path d="M14.500 8.500c-.750 0-1.500.750-1.500 1.500v3h-3c-.750 0-1.500.750-1.500 1.500S9.250 16 10 16h3v3c0 .750.750 1.500 1.500 1.500S16 19.750 16 19v-3h3c.750 0 1.500-.750 1.500-1.500S19.750 13 19 13h-3v-3c0-.750-.750-1.500-1.500-1.500z" />
          </svg>
        </button>
        <button aria-label="Zoom out" className="flex size-[58px] items-center justify-center rounded-t-2xl border-t-2 border-[#ddd]">
          <svg width="58" height="58" viewBox="0 0 29 29" fill="currentColor">
            <path d="M10 13c-.750 0-1.500.750-1.500 1.500S9.250 16 10 16h9c.750 0 1.500-.750 1.500-1.500S19.750 13 19 13h-9z" />
          </svg>
        </button>
        <button aria-label="Reset bearing to north" className="flex size-[58px] items-center justify-center rounded-t-2xl border-t-2 border-[#ddd]">
          <svg width="58" height="58" viewBox="0 0 29 29" fill="currentColor">
            <path d="M10.500 14l4-8 4 8h-8z" />
            <path d="M10.500 16l4 8 4-8h-8z" fill="#ccc" />
          </svg>
        </button>
      </div>
      <button
        aria-label="Find my location"
        className="flex size-[58px] items-center justify-center rounded-lg bg-white shadow-[0_0_0_4px_rgba(0,0,0,0.1)]"
      >
        <svg width="58" height="58" viewBox="0 0 20 20" fill="currentColor">
          <path d="M10 4C9 4 9 5 9 5v.1A5 5 0 0 0 5.100 9H5s-1 0-1 1 1 1 1 1h.1A5 5 0 0 0 9 14.900v.1s0 1 1 1 1-1 1-1v-.1a5 5 0 0 0 3.900-3.900h.1s1 0 1-1-1-1-1-1h-.1A5 5 0 0 0 11 5.100V5s0-1-1-1zm0 2.500a3.500 3.500 0 1 1 0 7 3.500 3.500 0 1 1 0-7z" />
          <circle cx="10" cy="10" r="2" />
        </svg>
      </button>
    </div>
  );
}

export default function App() {
  return (
    <div className="flex min-h-screen flex-col bg-linear-to-br from-[#e0e4ec] via-[#dee2ea] to-[#d9dde7] font-[Inter,'Liberation_Sans',sans-serif]">
      <BrowserBar />
      <main className="flex flex-1 flex-col items-center pt-12 pr-11 pl-[52px]">
        <LanguageToggle />

        <h1 className="mt-17 flex items-center gap-5 font-[Roboto,'Liberation_Sans',sans-serif] text-[80px] leading-[96px] font-semibold">
          <span className="bg-linear-to-r from-[#3771e0] to-[#6f9ff5] bg-clip-text text-transparent">Help Myanmar Rise</span>
          <MyanmarFlag />
        </h1>
        <p className="mt-[42px] text-[36px] leading-[48px] font-light text-[#555]">Earthquake Relief and Recovery Tracker</p>

        <nav className="mt-[62px] flex gap-28 text-[31px] leading-[40px] font-medium text-[#3771e0]">
          {NAV.map((item) => (
            <a key={item} href="#">
              {item}
            </a>
          ))}
        </nav>

        <section className="mt-[126px] flex gap-16">
          {STATS.map((stat) => (
            <div
              key={stat.label}
              className={`flex size-60 flex-col items-center justify-center rounded-full bg-linear-to-br text-white shadow-[0_16px_48px_rgba(0,0,0,0.15)] ${stat.tone}`}
            >
              <strong className="mt-3 text-[58px] leading-[64px] font-bold">{stat.value}</strong>
              <span className="mt-1 text-[30px] leading-[48px] font-medium opacity-90">{stat.label}</span>
            </div>
          ))}
        </section>

        <section className="relative mt-28 min-h-96 w-full flex-1 overflow-hidden rounded-t-3xl shadow-[0_16px_64px_rgba(0,0,0,0.12)]">
          <ReliefMap />
          <MapControls />
          <div className="pointer-events-none absolute inset-x-0 bottom-0 h-16 bg-linear-to-t from-black/12 to-transparent" />
        </section>
      </main>
    </div>
  );
}
